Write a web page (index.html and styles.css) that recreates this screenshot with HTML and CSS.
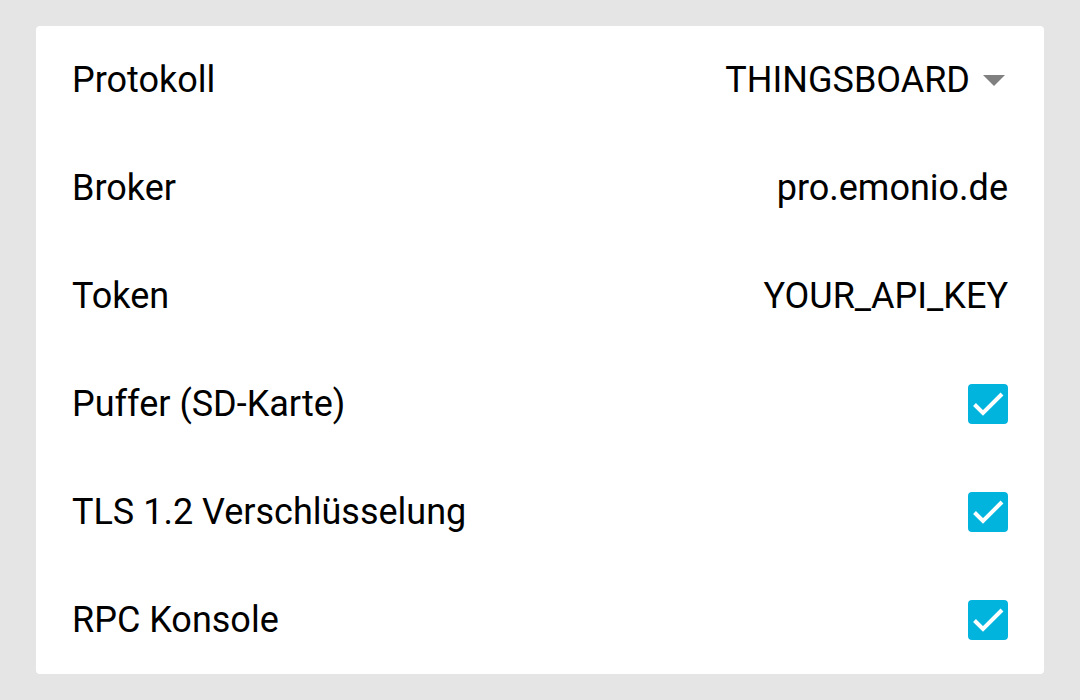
FILE: index.html
```html
<!DOCTYPE html>
<html lang="de">
<head>
  <meta charset="UTF-8">
  <title>Cloud-Einstellungen</title>
  <link rel="stylesheet" href="styles.css">
</head>
<body>

<div class="card">
  <div class="row">
    <span class="label">Protokoll</span>
    <span class="select">THINGSBOARD <span class="caret"></span></span>
  </div>
  <div class="row">
    <span class="label">Broker</span>
    <span class="value">pro.emonio.de</span>
  </div>
  <div class="row">
    <span class="label">Token</span>
    <span class="value">YOUR_API_KEY</span>
  </div>
  <div class="row">
    <span class="label">Puffer (SD-Karte)</span>
    <span class="check"><svg viewBox="0 0 40 40" width="40" height="40"><path d="M6.5 20.5 L15 29 L34 10" fill="none" stroke="#fff" stroke-width="4"/></svg></span>
  </div>
  <div class="row">
    <span class="label">TLS 1.2 Verschlüsselung</span>
    <span class="check"><svg viewBox="0 0 40 40" width="40" height="40"><path d="M6.5 20.5 L15 29 L34 10" fill="none" stroke="#fff" stroke-width="4"/></svg></span>
  </div>
  <div class="row">
    <span class="label">RPC Konsole</span>
    <span class="check"><svg viewBox="0 0 40 40" width="40" height="40"><path d="M6.5 20.5 L15 29 L34 10" fill="none" stroke="#fff" stroke-width="4"/></svg></span>
  </div>
</div>

</body>
</html>
```

FILE: styles.css
```css
:root {
  --page-bg: #e5e5e5;
  --card-bg: #ffffff;
  --accent: #00b4de;
  --text: #000000;
  --caret: #808080;
}

body {
  margin: 0;
  background-color: var(--page-bg);
  font-family: Roboto, "Noto Sans", sans-serif;
  color: var(--text);
}

.card {
  margin: 26px 36px 0 36px;
  background-color: var(--card-bg);
  border-radius: 4px;
  padding: 0 36px;
}

.row {
  height: 108px;
  display: flex;
  align-items: center;
  justify-content: space-between;
  font-size: 36px;
}

.select {
  display: flex;
  align-items: center;
  gap: 13px;
}

.caret {
  width: 0;
  height: 0;
  border-left: 11px solid transparent;
  border-right: 11px solid transparent;
  border-top: 11px solid var(--caret);
  margin-right: 3px;
}

.check {
  width: 40px;
  height: 40px;
  background-color: var(--accent);
  border-radius: 4px;
  display: block;
}

.check svg {
  display: block;
}
```
